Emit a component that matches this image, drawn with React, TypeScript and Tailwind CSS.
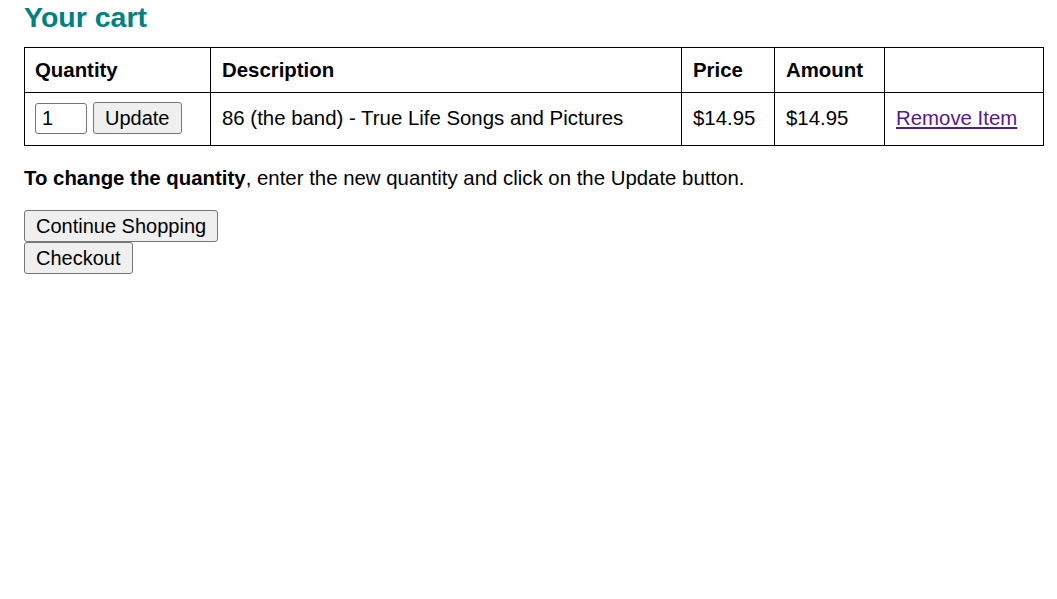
export default function App() {
  return (
    <div className="min-h-screen bg-white px-6 text-black [font-family:'Liberation_Sans',Arial,sans-serif] text-[20.4px] leading-[23px]">
      <h1 className="pt-[1px] text-[28.5px] leading-[32px] font-bold text-[#008080]">Your cart</h1>

      <table className="mt-[14px] w-[1020px] border-collapse border border-black">
        <thead>
          <tr className="h-[45px]">
            <th className="w-[186px] border border-black px-[10px] text-left font-bold">Quantity</th>
            <th className="w-[471px] border border-black px-[11px] text-left font-bold">Description</th>
            <th className="w-[93px] border border-black px-[11px] text-left font-bold">Price</th>
            <th className="w-[110px] border border-black px-[11px] text-left font-bold">Amount</th>
            <th className="border border-black"></th>
          </tr>
        </thead>
        <tbody>
          <tr className="h-[53px]">
            <td className="border border-black px-[10px] pb-[2px]">
              <div className="flex items-center gap-[6px]">
                <input
                  defaultValue="1"
                  className="h-[31px] w-[52px] rounded-[3px] border border-[#767676] px-[6px] text-[20px]"
                />
                <button className="h-[32px] rounded-[3px] border border-[#767676] bg-[#efefef] px-[11px] text-[20px]">
                  Update
                </button>
              </div>
            </td>
            <td className="border border-black px-[11px] pb-[2px]">86 (the band) - True Life Songs and Pictures</td>
            <td className="border border-black px-[11px] pb-[2px]">$14.95</td>
            <td className="border border-black px-[11px] pb-[2px]">$14.95</td>
            <td className="border border-black px-[11px] pb-[2px]">
              <a href="#" className="text-[#551a8b] underline">Remove Item</a>
            </td>
          </tr>
        </tbody>
      </table>

      <p className="mt-[21px]">
        <b>To change the quantity</b>, enter the new quantity and click on the Update button.
      </p>

      <div className="mt-[20px] flex flex-col items-start">
        <button className="h-[32px] rounded-[3px] border border-[#767676] bg-[#efefef] px-[11px] text-[20px]">
          Continue Shopping
        </button>
        <button className="h-[32px] rounded-[3px] border border-[#767676] bg-[#efefef] px-[11px] text-[20px]">
          Checkout
        </button>
      </div>
    </div>
  );
}
